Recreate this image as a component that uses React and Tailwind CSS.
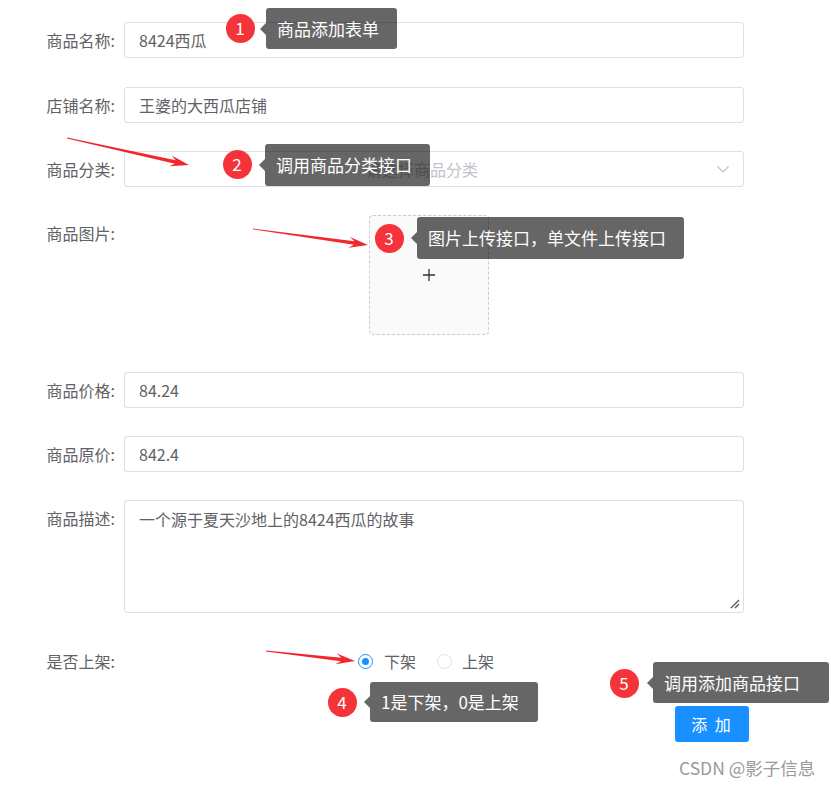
import React from "react";

const FONT = { fontFamily: '"Microsoft YaHei", "Noto Sans CJK SC", "Noto Sans", sans-serif' };

function Arrow({ x1, y1, x2, y2 }) {
  const dx = x2 - x1;
  const dy = y2 - y1;
  const len = Math.hypot(dx, dy);
  const ux = dx / len;
  const uy = dy / len;
  const nx = -uy;
  const ny = ux;
  const p = (bx, by, along, side) => [bx + ux * along + nx * side, by + uy * along + ny * side];
  const pts = [
    p(x1, y1, 0, 0.4),
    p(x2, y2, -14, 1.8),
    p(x2, y2, -19, 5.5),
    [x2, y2],
    p(x2, y2, -19, -5.5),
    p(x2, y2, -14, -1.8),
    p(x1, y1, 0, -0.4),
  ];
  return <polygon points={pts.map((q) => q.join(",")).join(" ")} fill="#f2262c" />;
}

function Badge({ n, cx, cy }) {
  return (
    <div
      className="absolute flex h-[29px] w-[29px] items-center justify-center rounded-full bg-[#f5333a] text-[17px] text-white"
      style={{ left: cx - 14.5, top: cy - 14.5 }}
    >
      {n}
    </div>
  );
}

function Tip({ children, left, top, width, height }) {
  return (
    <div className="absolute" style={{ left, top, width, height }}>
      <div className="absolute left-[-6px] top-1/2 h-0 w-0 -translate-y-1/2 border-y-[6px] border-r-[6px] border-y-transparent border-r-black/60" />
      <div className="flex h-full w-full items-center rounded-[3px] bg-black/60 pl-[11px] text-[17px] text-white whitespace-nowrap">
        {children}
      </div>
    </div>
  );
}

function Label({ children }) {
  return (
    <div className="w-[124px] shrink-0 pr-[9px] text-right text-[16px] leading-[36px] text-[#606266]">
      {children}
    </div>
  );
}

function Input({ value }) {
  return (
    <div className="flex h-[36px] w-[620px] items-center rounded-[3px] border border-[#dcdfe6] bg-white pl-[14px] text-[16px] text-[#606266]">
      {value}
    </div>
  );
}

export default function App() {
  return (
    <div className="relative h-[785px] w-[831px] overflow-hidden bg-white" style={FONT}>
      <div className="flex flex-col">
        <div className="mt-[22px] flex">
          <Label>商品名称:</Label>
          <Input value="8424西瓜" />
        </div>
        <div className="mt-[29px] flex">
          <Label>店铺名称:</Label>
          <Input value="王婆的大西瓜店铺" />
        </div>
        <div className="mt-[28px] flex">
          <Label>商品分类:</Label>
          <div className="relative flex h-[36px] w-[620px] items-center rounded-[3px] border border-[#dcdfe6] bg-white pl-[241px] text-[16px] text-[#c0c4cc]">
            请选择商品分类
            <svg className="absolute right-[13px] top-[11px]" width="14" height="12" viewBox="0 0 14 12">
              <path d="M1.5 3.5 L7 9 L12.5 3.5" fill="none" stroke="#c0c4cc" strokeWidth="1.2" />
            </svg>
          </div>
        </div>
        <div className="mt-[28px] flex">
          <Label>商品图片:</Label>
          <div className="ml-[245px] flex h-[120px] w-[120px] items-center justify-center rounded-[4px] border border-dashed border-[#c0ccda] bg-[#fafafa]">
            <svg width="14" height="14" viewBox="0 0 14 14">
              <path d="M7 1 V13 M1 7 H13" stroke="#333" strokeWidth="1.3" />
            </svg>
          </div>
        </div>
        <div className="mt-[37px] flex">
          <Label>商品价格:</Label>
          <Input value="84.24" />
        </div>
        <div className="mt-[28px] flex">
          <Label>商品原价:</Label>
          <Input value="842.4" />
        </div>
        <div className="mt-[28px] flex">
          <Label>商品描述:</Label>
          <div className="relative h-[113px] w-[620px] rounded-[3px] border border-[#dcdfe6] bg-white pl-[14px] pt-[6px] text-[16px] leading-[24px] text-[#606266]">
            一个源于夏天沙地上的8424西瓜的故事
            <svg className="absolute bottom-[3px] right-[3px]" width="11" height="11" viewBox="0 0 11 11">
              <path d="M10 2 L2 10 M10 6 L6 10" stroke="#555" strokeWidth="1.3" />
            </svg>
          </div>
        </div>
        <div className="mt-[30px] flex items-center">
          <Label>是否上架:</Label>
          <div className="ml-[234px] flex items-center text-[16px] text-[#606266]">
            <span className="flex h-[15px] w-[15px] items-center justify-center rounded-full border border-[#1890ff] bg-white">
              <span className="h-[7px] w-[7px] rounded-full bg-[#1890ff]" />
            </span>
            <span className="ml-[11px]">下架</span>
            <span className="ml-[21px] h-[15px] w-[15px] rounded-full border border-[#dcdfe6] bg-white" />
            <span className="ml-[10px]">上架</span>
          </div>
        </div>
        <div className="mt-[27px] flex">
          <button className="ml-[675px] flex h-[36px] w-[74px] items-center justify-center rounded-[3px] bg-[#1890ff] text-[16px] tracking-[2px] text-white">
            添 加
          </button>
        </div>
      </div>

      <div className="absolute left-[679px] top-[755px] text-[17.5px] text-[#999999]">CSDN @影子信息</div>

      <svg className="pointer-events-none absolute left-0 top-0" width="831" height="785">
        <Arrow x1={67} y1={138} x2={189} y2={165} />
        <Arrow x1={253} y1={229} x2={368} y2={245} />
        <Arrow x1={266} y1={651} x2={355} y2={661} />
      </svg>

      <Badge n="1" cx={240} cy={28} />
      <Tip left={266} top={8} width={131} height={41}>商品添加表单</Tip>
      <Badge n="2" cx={237} cy={164} />
      <Tip left={265} top={144} width={165} height={42}>调用商品分类接口</Tip>
      <Badge n="3" cx={389} cy={238} />
      <Tip left={417} top={217} width={267} height={42}>图片上传接口，单文件上传接口</Tip>
      <Badge n="4" cx={342} cy={702} />
      <Tip left={370} top={682} width={168} height={40}>1是下架，0是上架</Tip>
      <Badge n="5" cx={624} cy={683} />
      <Tip left={653} top={662} width={176} height={41}>调用添加商品接口</Tip>
    </div>
  );
}
